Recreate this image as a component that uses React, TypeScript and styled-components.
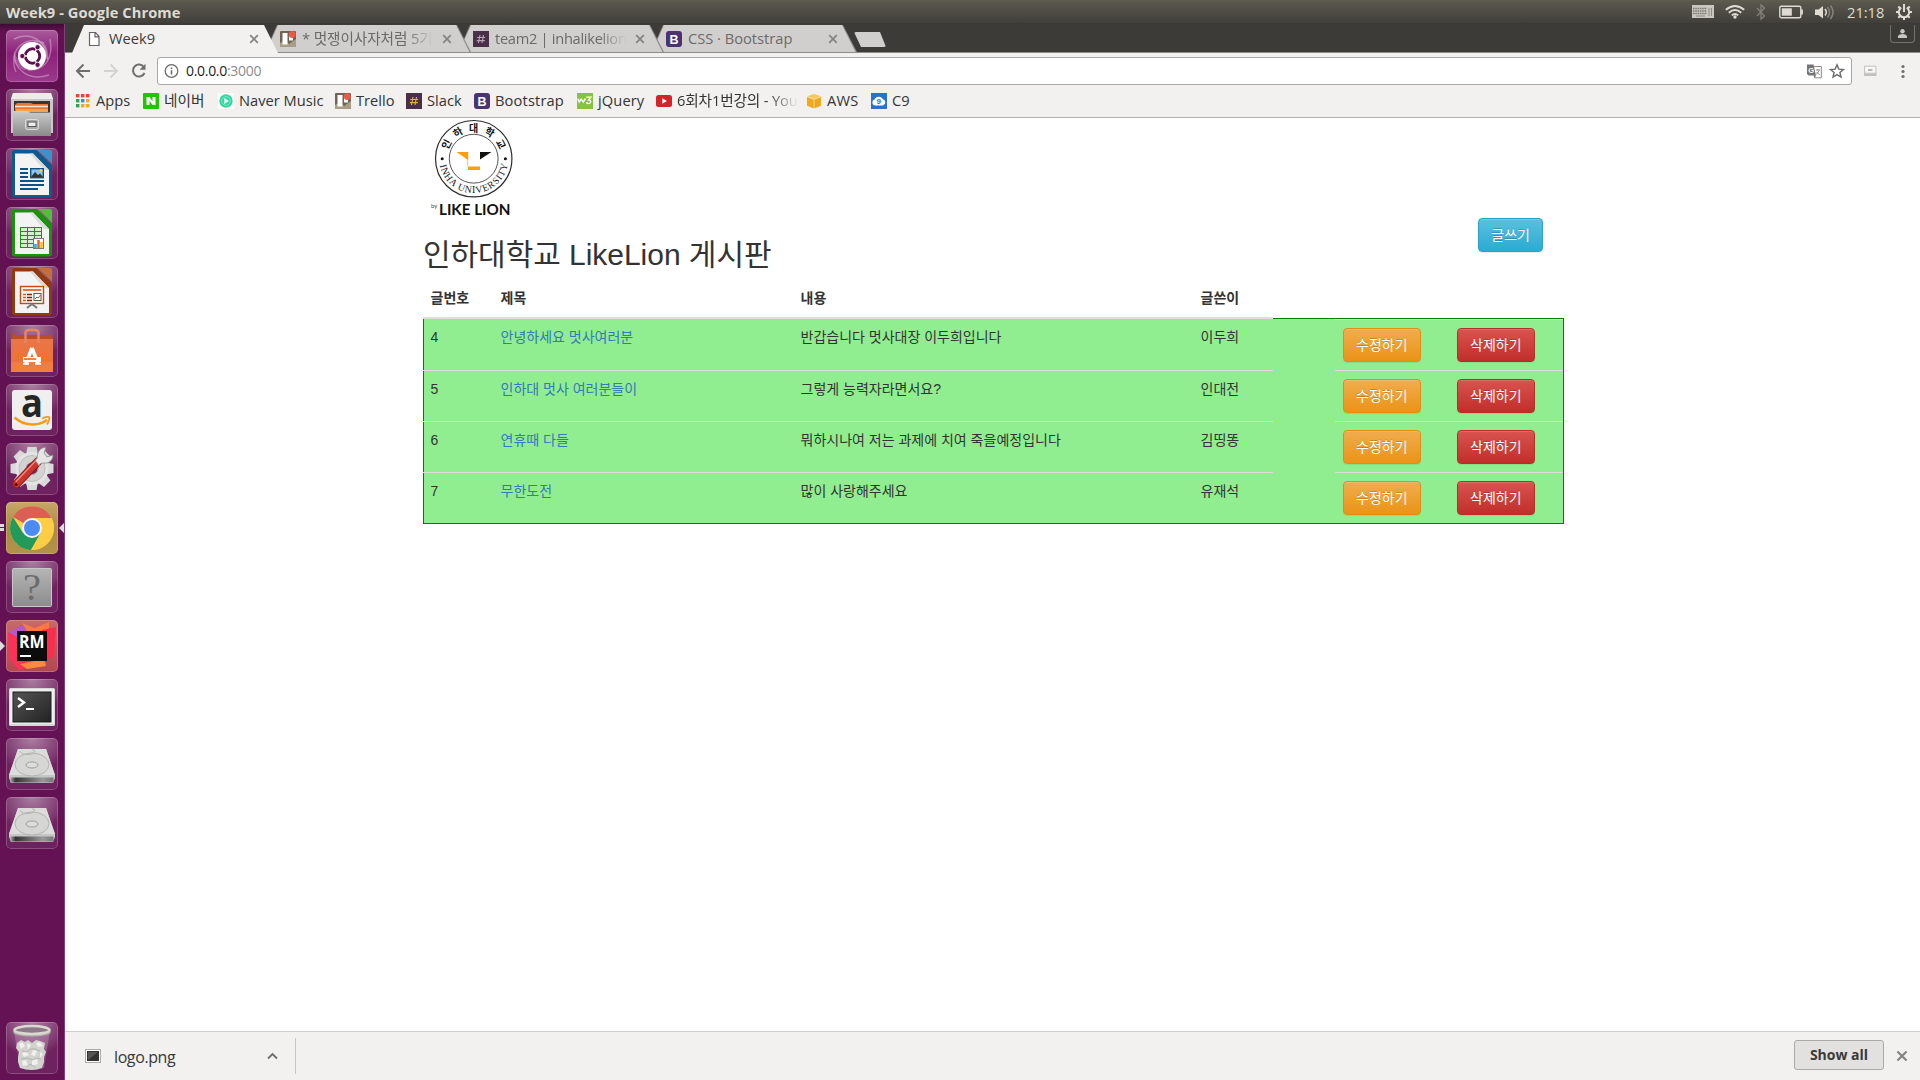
import React from 'react';
import styled, { createGlobalStyle, css } from 'styled-components';

const ui = `"Open Sans", "Noto Sans CJK KR", sans-serif`;
const body = `"Liberation Sans", "Noto Sans CJK KR", sans-serif`;

const Global = createGlobalStyle`
  *, *::before, *::after { box-sizing: border-box; }
  body { margin: 0; background: #fff; overflow: hidden; }
  svg { display: block; flex: none; }
`;

const Desktop = styled.div`
  width: 1920px;
  height: 1080px;
  display: grid;
  grid-template: 24px 1056px / 65px 1855px;
  font-family: ${ui};
  overflow: hidden;
`;

const Label = styled.span<{ $ls?: number }>`
  white-space: nowrap;
  letter-spacing: ${p => p.$ls ?? 0}px;
`;

/* ---------- top panel ---------- */
const Panel = styled.header`
  grid-column: 1 / -1;
  display: flex;
  align-items: center;
  justify-content: space-between;
  padding: 0 8px 0 6px;
  background: linear-gradient(#5f5c50 0, #59564d 3px, #403f3a 23px, #35342f 24px);
  color: #dfdbd2;
`;
const PanelTitle = styled(Label)`
  font-size: 14.67px;
  font-weight: 700;
  line-height: 22px;
  margin-bottom: 1px;
`;
const Tray = styled.div`
  display: flex;
  align-items: center;
  height: 24px;
`;
const Clock = styled(Label)`
  font-size: 14.67px;
  line-height: 22px;
  width: 36px;
  margin: 0 13px 1px 12px;
`;

/* ---------- launcher ---------- */
const LauncherBar = styled.nav`
  display: flex;
  flex-direction: column;
  align-items: flex-start;
  gap: 7px;
  padding: 6px 0 6px 6px;
  background: linear-gradient(#3f0b36 0, #611151 7px, #651254 100%);
  border-right: 1px solid #84407a;
`;
const Tile = styled.div<{ $bg?: string; $last?: boolean }>`
  position: relative;
  width: 52px;
  height: 52px;
  border-radius: 5px;
  background: ${p =>
    p.$bg ??
    'radial-gradient(ellipse 70% 34px at 50% 0, rgba(255,255,255,.42), rgba(255,255,255,.1) 80%, transparent), rgba(255,255,255,.07)'};
  box-shadow: inset 0 0 0 1px rgba(255, 255, 255, 0.2);
  ${p => p.$last && css`margin-top: auto;`}
`;
const Pip = styled.i<{ $right?: boolean }>`
  position: absolute;
  top: 21px;
  ${p => (p.$right ? 'left: 53px;' : 'left: -6px;')}
  border: 5px solid transparent;
  ${p => (p.$right ? 'border-right-color: #ddd; border-left-width: 0;' : 'border-left-color: #ddd; border-right-width: 0;')}
`;
const Bars = styled.i`
  position: absolute;
  left: -6px;
  top: 22px;
  width: 4px;
  height: 7px;
  border: solid #ddd;
  border-width: 3px 0;
`;

/* ---------- browser chrome ---------- */
const Browser = styled.main`
  display: flex;
  flex-direction: column;
  background: #fff;
`;
const TabStrip = styled.div`
  display: flex;
  justify-content: space-between;
  align-items: flex-start;
  height: 29px;
  padding: 1px 5px 0 7px;
  background: #3c3b37;
  border-bottom: 1px solid #8f8d8b;
`;
const Tabs = styled.div`
  display: flex;
  isolation: isolate;
`;
const Tab = styled.div<{ $active?: boolean; $z: number }>`
  position: relative;
  z-index: ${p => p.$z};
  display: flex;
  align-items: center;
  width: 206px;
  height: ${p => (p.$active ? 28 : 27)}px;
  margin-right: -13px;
  padding: 0 19px 0 15px;
  color: ${p => (p.$active ? '#3c3c3c' : '#6b6a69')};
  background: ${p => (p.$active ? '#f2f1f0' : '#8d8b89')};
  clip-path: polygon(0 100%, 12px 0, 192px 0, 100% 100%);
  font-size: 14.67px;
  line-height: 27px;
  &::before {
    content: '';
    position: absolute;
    z-index: -1;
    inset: 0;
    background: ${p => (p.$active ? '#f2f1f0' : '#d1cfcd')};
    clip-path: polygon(1px 100%, 13px 0, 191px 0, 204.5px 100%);
  }
`;
const Favicon = styled.span<{ $gap?: number }>`
  width: 16px;
  height: 16px;
  margin-right: ${p => p.$gap ?? 6}px;
  flex: none;
`;
const TabText = styled(Label)<{ $fade?: boolean }>`
  flex: 1;
  overflow: hidden;
  margin: -1px 9px 0 0;
  ${p => p.$fade && css`mask-image: linear-gradient(90deg, #000 80%, transparent 100%);`}
`;
const NewTab = styled.div`
  width: 32px;
  height: 15px;
  margin: 7px 0 0 10px;
  background: #d1cfcd;
  border-radius: 2px;
  clip-path: polygon(0 0, 26px 0, 100% 100%, 7px 100%);
`;
const Profile = styled.div`
  display: flex;
  justify-content: center;
  width: 25px;
  height: 18px;
  padding-top: 4px;
  border: 1px solid #74726c;
  border-top: 0;
  border-radius: 0 0 4px 4px;
`;
const Toolbar = styled.div`
  display: flex;
  align-items: center;
  height: 36px;
  padding: 0 11px 0 10px;
  background: #f2f1f0;
`;
const NavButton = styled.span`
  width: 18px;
  height: 18px;
  margin-right: 10px;
`;
const Omnibox = styled.div`
  display: flex;
  align-items: center;
  width: 1695px;
  height: 28px;
  margin: 0 12px 0 -2px;
  padding: 0 6px;
  border: 1px solid #a9a7a5;
  border-radius: 3px;
  background: #fff;
`;
const Url = styled(Label)`
  flex: 1;
  margin-left: 7px;
  font-size: 14px;
  line-height: 24px;
  color: #222;
  span { color: #8c8c8c; }
`;
const Bookmarks = styled.div`
  display: flex;
  align-items: center;
  height: 29px;
  padding: 0 0 5px 11px;
  background: #f2f1f0;
  border-bottom: 1px solid #b3b1af;
`;
const Bookmark = styled.div<{ $w: number }>`
  display: flex;
  align-items: center;
  width: ${p => p.$w}px;
  flex: none;
  color: #343434;
  font-size: 14.67px;
  line-height: 22px;
`;
const BookmarkText = styled(Label)<{ $fade?: boolean }>`
  margin-bottom: 1px;
  ${p => p.$fade && css`mask-image: linear-gradient(90deg, #000 76%, transparent 100%);`}
`;

/* ---------- page ---------- */
const Page = styled.section`
  flex: 1;
  padding-left: 358px;
  font-family: ${body};
  font-size: 14px;
  line-height: 20px;
  color: #333;
`;
const Container = styled.div`
  width: 1141px;
`;
const Banner = styled.div`
  display: flex;
  justify-content: space-between;
  height: 159px;
  padding-right: 21px;
`;
const Heading = styled.h2`
  margin: 10px 0 0;
  font-size: 30px;
  font-weight: 400;
  line-height: 33px;
  letter-spacing: -0.04px;
  white-space: nowrap;
`;
const tones = {
  info: ['#5bc0de', '#2aabd2', '#28a4c9'],
  warning: ['#f0ad4e', '#eb9316', '#e38d13'],
  danger: ['#d9534f', '#c12e2a', '#b92c28'],
};
const Btn = styled.button<{ $tone: keyof typeof tones }>`
  height: 34px;
  padding: 0 12px;
  border: 1px solid ${p => tones[p.$tone][2]};
  border-radius: 4px;
  background: linear-gradient(${p => tones[p.$tone][0]}, ${p => tones[p.$tone][1]});
  box-shadow: inset 0 1px 0 rgba(255, 255, 255, 0.15), 0 1px 1px rgba(0, 0, 0, 0.075);
  text-shadow: 0 -1px 0 rgba(0, 0, 0, 0.2);
  color: #fff;
  font: 14px/20px ${body};
  white-space: nowrap;
`;
const WriteButton = styled(Btn)`
  margin-top: 100px;
`;
const columns = '70px 300px 400px 80px 62px 114px 1fr';
const HeadRow = styled.div`
  position: relative;
  z-index: 1;
  display: grid;
  grid-template-columns: ${columns};
  height: 42px;
`;
const HeadCell = styled.div`
  padding: 11px 8px 0 7.5px;
  border-bottom: 2px solid #ddd;
  font-weight: 700;
`;
const Board = styled.div`
  margin-top: -1px;
  border: 1px solid #008000;
  background: #90ee90;
`;
const Row = styled.div`
  display: grid;
  grid-template-columns: ${columns};
  height: 51px;
  margin-left: -1px;
`;
const Cell = styled.div<{ $line?: boolean; $edge?: boolean; $up?: boolean }>`
  padding: 8px 8px 0 7.5px;
  border-top: 1px solid ${p => (p.$line ? '#ddd' : 'transparent')};
  ${p => p.$up && css`padding-top: 7px;`}
  ${p => p.$edge && css`background: linear-gradient(#008000, #008000) 0 0 / 1px 100% no-repeat padding-box;`}
`;
const ActionCell = styled(Cell)`
  padding-left: 8px;
`;
const PostLink = styled.a`
  color: #337ab7;
`;

/* ---------- download shelf ---------- */
const Shelf = styled.footer`
  display: flex;
  align-items: center;
  height: 49px;
  padding: 0 12px 0 20px;
  background: #f2f1f0;
  border-top: 1px solid #cfcdcb;
`;
const Download = styled.div`
  display: flex;
  align-items: center;
  width: 211px;
  height: 36px;
  padding-right: 17px;
  border-right: 1px solid #c9c7c5;
  color: #383838;
  font-size: 16px;
`;
const FileName = styled(Label)`
  flex: 1;
  margin: 1px 0 0 13px;
`;
const ShowAll = styled.button`
  width: 90px;
  height: 30px;
  margin: 0 12px 2px auto;
  padding: 0;
  border: 1px solid #aba9a7;
  border-radius: 3px;
  background: #e2e1df;
  color: #3a3a3a;
  font: 700 14px/26px ${ui};
`;

/* ---------- small icons ---------- */
const Close = ({ size = 10 }: { size?: number }) => (
  <svg width={size} height={size} viewBox="0 0 10 10">
    <path d="M1.2 1.2 8.8 8.8M8.8 1.2 1.2 8.8" stroke="#858483" strokeWidth="1.8" />
  </svg>
);
const TrelloIcon = () => (
  <svg width="16" height="16" viewBox="0 0 16 16">
    <rect width="16" height="16" rx="1" fill="#6f6551" />
    <path d="M0 12 5 9l4 4 7-5v8H0z" fill="#a99d85" />
    <rect x="2.500" y="2" width="5" height="11.500" fill="#fff" />
    <rect x="9" y="2" width="4" height="7.500" fill="#fff" />
    <circle cx="12.200" cy="3.600" r="3.400" fill="#eb5a46" />
  </svg>
);
const SlackIcon = ({ c = '#e5b13b' }: { c?: string }) => (
  <svg width="16" height="16" viewBox="0 0 16 16">
    <rect width="16" height="16" fill="#4a2f48" />
    <path d="M7 4 5.5 12M10.5 4 9 12M4.2 6.5h8M3.8 9.6h8" stroke={c} strokeWidth="1.1" />
  </svg>
);
const BootstrapIcon = () => (
  <svg width="16" height="16" viewBox="0 0 16 16">
    <rect width="16" height="16" rx="3" fill="#4c3173" />
    <text x="3.6" y="12.6" fontFamily="Liberation Sans" fontWeight="700" fontSize="12.5" fill="#fff">B</text>
  </svg>
);
const AppsIcon = () => (
  <svg width="14" height="16" viewBox="0 0 14 16">
    {['#ea4335', '#ea4335', '#ea4335', '#34a060', '#2f8df0', '#f3a91c', '#34a060', '#f3a91c', '#f3a91c'].map((c, i) => (
      <rect key={i} x={(i % 3) * 5} y={1 + Math.floor(i / 3) * 5} width="3.4" height="3.4" fill={c} />
    ))}
  </svg>
);
const NaverIcon = () => (
  <svg width="16" height="16" viewBox="0 0 16 16">
    <rect width="16" height="16" rx="1" fill="#1ec800" />
    <path d="M3.5 12V4h3l3 4.2V4h3v8h-3l-3-4.2V12z" fill="#fff" />
  </svg>
);
const MusicIcon = () => (
  <svg width="16" height="16" viewBox="0 0 16 16">
    <rect width="16" height="16" fill="#fff" />
    <circle cx="8" cy="8" r="6.7" fill="#2fd8a0" />
    <circle cx="8" cy="8" r="4.3" fill="none" stroke="#8eeccc" strokeWidth=".8" />
    <path d="m6.3 5 4.6 3-4.6 3z" fill="#fff" />
  </svg>
);
const JqIcon = () => (
  <svg width="16" height="16" viewBox="0 0 16 16">
    <rect width="16" height="16" fill="#86c440" />
    <path d="M.7 5.500 2.200 9 4.200 6.200 6.200 9 8.500 5.500M9.300 4.300h4.500l-2.200 2.500c3 0 2.600 4-.3 3.800-1.200 0-1.800-.6-2-1.300" fill="none" stroke="#fff" strokeWidth="1.400" />
  </svg>
);
const YtIcon = () => (
  <svg width="16" height="16" viewBox="0 0 16 16">
    <rect y="2" width="16" height="12" rx="2.5" fill="#d3242a" />
    <path d="m6.3 5.2 4.6 2.8-4.6 2.8z" fill="#fff" />
  </svg>
);
const AwsIcon = () => (
  <svg width="16" height="16" viewBox="0 0 16 16">
    <path d="M1 3.300 8 1l7 2.300L8 6z" fill="#f8c65a" />
    <path d="M1 4v8.800L7.700 15.500V6.600zM15 4v8.800L8.300 15.500V6.600z" fill="#efa91f" />
  </svg>
);
const C9Icon = () => (
  <svg width="16" height="16" viewBox="0 0 16 16">
    <rect width="16" height="16" fill="#2a73c4" />
    <path d="M4 12.500a3 3 0 0 1-.4-5.900C4.500 3 10.500 2.500 11.800 6.300a3.200 3.200 0 0 1 .2 6.200z" fill="#fff" />
    <text x="5.600" y="11" fontFamily="Liberation Sans" fontWeight="700" fontSize="8" fill="#2a73c4">9</text>
  </svg>
);
const PageIcon = () => (
  <svg width="16" height="16" viewBox="0 0 16 16">
    <path d="M2.500 1.500h6l3.500 3.800v9.200h-9.500zM8 1.500v4.300h4" fill="#fff" stroke="#646464" strokeWidth="1.200" />
  </svg>
);

/* ---------- launcher icons, drawn on the 52px tile ---------- */
const Ico = ({ children }: { children: React.ReactNode }) => (
  <svg width="52" height="52" viewBox="0 0 52 52">{children}</svg>
);
const Dash = () => (
  <Ico>
    <g fill="none" stroke="#fff" strokeOpacity=".32" strokeWidth="1.500">
      <path d="M10 42C1 20 20 4 38 13M44 9c4 20-6 32-22 31M8 9c16-8 34 2 33 20M43 45C22 52 6 38 9 22" />
    </g>
    <path d="M26 40C10 42 6 30 8 21c3 9 8 15 18 19zM26 12c12-6 18 6 16 20-2-9-8-16-16-20z" fill="#fff" opacity=".2" />
    <circle cx="26" cy="26" r="14" fill="#fff" />
    <circle cx="26.500" cy="26" r="7.200" fill="none" stroke="#5c104c" strokeWidth="2.900" />
    <path d="M26.500 26 14 26M26.500 26l6.500-11M26.500 26l6.500 11" stroke="#fff" strokeWidth="1.300" />
    <circle cx="26.500" cy="26" r="5.600" fill="#fff" />
    <g fill="#5c104c" stroke="#fff" strokeWidth=".8">
      <circle cx="16.300" cy="26" r="2.600" />
      <circle cx="31.600" cy="17.200" r="2.600" />
      <circle cx="31.600" cy="34.800" r="2.600" />
    </g>
  </Ico>
);
const Files = () => (
  <Ico>
    <defs>
      <linearGradient id="cab" x1="0" y1="0" x2="0" y2="1"><stop stopColor="#ccc" /><stop offset="1" stopColor="#8a8a8a" /></linearGradient>
    </defs>
    <path d="M7 4h38l2 6v34H5V10z" fill="#c9c9c9" />
    <path d="M7 4h38l2 6H5z" fill="#ececec" />
    <rect x="8" y="12" width="36" height="12" fill="#3a3531" />
    <path d="M11 14h14l2 1h15v8H9v-7z" fill="#e8762c" />
    <path d="M9 17.500h33" stroke="#fbe4cc" strokeWidth="1.500" />
    <path d="M10 20h32v3H10z" fill="#f6a254" />
    <path d="M7 22h15l2 1.500h21V47H7z" fill="url(#cab)" />
    <rect x="19.500" y="30.500" width="13" height="10" rx="2" fill="#aaa" stroke="#dedede" />
    <rect x="22" y="33" width="8" height="4.500" fill="#eee" stroke="#555" />
  </Ico>
);
const Doc = ({ c, d, children }: { c: string; d: string; children: React.ReactNode }) => (
  <Ico>
    <path d="M8 2h19l19 19v26a2.500 2.500 0 0 1-2.500 2.500h-35A2.500 2.500 0 0 1 6 47V4a2 2 0 0 1 2-2z" fill={c} />
    <path d="M33 2h11a2 2 0 0 1 2 2v12z" fill={d} />
    <path d="M9 5.500h18L43 22v25H9z" fill="#f3f3f3" />
    <path d="M27 5.500 43 22h-5L24 5.500z" fill="#dadada" />
    <path d="M26 2h5l15 15.500V25z" fill={c} />
    {children}
  </Ico>
);
const Writer = () => (
  <Doc c="#0c5a8e" d="#3a94cc">
    <path d="M14 21h8M14 25h8M14 29h8M14 33h24M14 37h24M14 41h18" stroke="#0b5183" strokeWidth="2" />
    <rect x="24.700" y="20.700" width="12.600" height="9" fill="#8cc4ec" stroke="#0b5183" strokeWidth="1.400" />
    <path d="m25 29 4-5 3 3 2-1.500 3 3.500z" fill="#333" />
    <circle cx="35" cy="22.500" r="1.500" fill="#f4d43a" />
  </Doc>
);
const Calc = () => (
  <Doc c="#18930c" d="#50bf3c">
    <rect x="14.500" y="20.500" width="21" height="20" fill="#d5f0cc" stroke="#18930c" />
    <path d="M14 24.500h22M14 28.500h22M14 32.500h22M14 36.500h22M21.500 20v21M28.500 20v21" stroke="#18930c" />
    <rect x="27.500" y="31.500" width="10" height="10" fill="#fff" stroke="#777" />
    <path d="M29.500 41v-4" stroke="#29a5e3" strokeWidth="2.500" />
    <path d="M32.500 41v-8" stroke="#e2641b" strokeWidth="2.500" />
    <path d="M35.500 41v-6" stroke="#f0bf21" strokeWidth="2.500" />
  </Doc>
);
const Impress = () => (
  <Doc c="#93390e" d="#c2703a">
    <rect x="14.500" y="20.500" width="23" height="17" fill="#fff4ec" stroke="#c04d17" strokeWidth="1.400" />
    <path d="M17 24h18" stroke="#df7a48" strokeWidth="2" />
    <path d="M17 28.500h3M17 31.500h3M17 34.500h3" stroke="#d35c22" strokeWidth="1.700" />
    <path d="M21 28.500h5M21 31.500h5M21 34.500h5" stroke="#762b08" strokeWidth="1.700" />
    <rect x="28" y="27.500" width="7" height="7" fill="#fff" stroke="#555" />
    <path d="m29 33 2-2 1 1 2.500-3" stroke="#27a327" fill="none" />
    <path d="m26 38-5 4M26 38l5 4" stroke="#777" strokeWidth="2" />
  </Doc>
);
const Software = () => (
  <Ico>
    <defs><linearGradient id="bag" x1="0" y1="0" x2="0" y2="1"><stop stopColor="#e8764a" /><stop offset="1" stopColor="#f0702c" /></linearGradient></defs>
    <path d="M5 14h42v33H5z" fill="url(#bag)" />
    <path d="m5 14 2-9v5h38V5l2 9z" fill="#b94d24" />
    <path d="M5 37h42v10H5z" fill="#f4854c" opacity=".6" />
    <path d="M19.500 18V8q0-3 3-3h7q3 0 3 3v10" fill="none" stroke="#e78564" strokeWidth="2.500" />
    <path d="m26 23-6 15.500M26 23l6 15.500" stroke="#fff" strokeWidth="3.600" />
    <path d="M17 34.500h18" stroke="#fff" strokeWidth="5" />
    <path d="M18 34h12" stroke="#ee7434" strokeWidth="1.800" />
    <path d="M17 38.800h6M29 38.800h6" stroke="#fff" strokeWidth="2" />
  </Ico>
);
const Amazon = () => (
  <Ico>
    <rect x="6" y="6" width="40" height="40" rx="3" fill="#efefef" />
    <text x="15" y="33" fontFamily="Open Sans" fontWeight="700" fontSize="39" fill="#252525" textLength="22" lengthAdjust="spacingAndGlyphs">a</text>
    <path d="M8.500 33.500C18 42 32 42.500 41 36" fill="none" stroke="#f59a18" strokeWidth="2.400" />
    <path d="M36 34.500c4-2 8-2 7.500-.5s-1 4.500-2.500 6.500" fill="none" stroke="#f59a18" strokeWidth="1.800" />
  </Ico>
);
const Settings = () => (
  <Ico>
    <g fill="#d9d9d9">
      {[0, 45, 90, 135].map(a => (
        <path key={a} d="M21.500 4h9l1.500 8v27l-1.500 8h-9L20 39V12z" transform={`rotate(${a} 26 25.500)`} />
      ))}
    </g>
    <circle cx="26" cy="25.500" r="16.500" fill="#e4e4e4" />
    <circle cx="26" cy="25.500" r="13" fill="#d3d3d3" stroke="#bdbdbd" />
    <circle cx="26" cy="25.500" r="6" fill="#6d2b60" stroke="#aaa" />
    <path d="M10.500 41 32 18.500" stroke="#8e1712" strokeWidth="8.400" strokeLinecap="round" />
    <path d="M10.500 41 32 18.500" stroke="#cb352e" strokeWidth="6.600" strokeLinecap="round" />
    <path d="M10 38.500 30 17.500" stroke="#ee8880" strokeWidth="1.500" strokeLinecap="round" />
    <circle cx="10" cy="41.500" r="1.600" fill="#5e0e0a" />
    <path d="M29 17c3-1 2-4 3-7s4-6 8-5.500l-2 5.500 3 4 6-2c0 5-4 9-9 8-2 0-4 0-5 3z" fill="#e6e6e6" stroke="#888" strokeWidth=".8" />
  </Ico>
);
const ChromeIcon = () => (
  <Ico>
    <circle cx="26" cy="26" r="22" fill="#fdd048" />
    <path d="M45.500 16H26v10L7 15A22 22 0 0 1 45.500 16z" fill="#da5f55" />
    <path d="M7 15A22 22 0 0 0 25 48l9.500-17L17 31z" fill="#219a5b" />
    <path d="M25 48 35 31V16h10.500A22 22 0 0 1 25 48z" fill="#fdcd45" />
    <circle cx="26" cy="26" r="10" fill="#f5f5f5" />
    <circle cx="26" cy="26" r="8" fill="#4b8bf2" />
  </Ico>
);
const Unknown = () => (
  <Ico>
    <defs><linearGradient id="unk" x1="0" y1="0" x2="0" y2="1"><stop stopColor="#b5b5b5" /><stop offset="1" stopColor="#8c8c8c" /></linearGradient></defs>
    <rect x="6.500" y="7.500" width="39" height="38" rx="1" fill="url(#unk)" stroke="#c8c8c8" />
    <text x="17" y="38.500" fontFamily="Liberation Serif" fontSize="38" fill="#6c6c6c" textLength="18" lengthAdjust="spacingAndGlyphs">?</text>
  </Ico>
);
const RubyMine = () => (
  <Ico>
    <path d="m2 13 14-8 16 12 16 14-9 12-26 7L3 38z" fill="#fc3158" />
    <path d="m3 12 14-7 15 7-20 6z" fill="#b358cf" />
    <path d="m16 3 13 5 14-6v14l-20-2z" fill="#f97b3c" />
    <path d="M36 10 50 7l-2 30-14 4z" fill="#fb2d4f" />
    <path d="m14 44 24-5 2 7-19 3z" fill="#f98b3c" />
    <rect x="11" y="11" width="30" height="30" fill="#0c0c0c" />
    <text x="13" y="27.500" fontFamily="Open Sans" fontWeight="700" fontSize="17" fill="#fff" textLength="25.500" lengthAdjust="spacingAndGlyphs">RM</text>
    <path d="M14 36h11" stroke="#fff" strokeWidth="2" />
  </Ico>
);
const Terminal = () => (
  <Ico>
    <defs><linearGradient id="trm" x1="0" y1="0" x2="1" y2="1"><stop stopColor="#555" /><stop offset="1" stopColor="#222" /></linearGradient></defs>
    <rect x="3" y="9" width="46" height="38" rx="1.500" fill="#d6d6d6" />
    <rect x="4" y="10" width="44" height="35" fill="#efefef" />
    <rect x="7" y="13" width="38" height="30" fill="url(#trm)" stroke="#1e1e1e" />
    <path d="m12 19 6 4.500-6 4.500" fill="none" stroke="#fff" strokeWidth="2.400" />
    <path d="M20 30h8" stroke="#fff" strokeWidth="2" />
  </Ico>
);
const Drive = () => (
  <Ico>
    <defs><linearGradient id="drv"><stop stopColor="#a5a5a5" /><stop offset=".12" stopColor="#333" /><stop offset=".75" stopColor="#999" /><stop offset="1" stopColor="#777" /></linearGradient></defs>
    <path d="M12 11h28l9 26v3l-2 5H5l-2-5v-3z" fill="#c6c6c6" />
    <path d="M12 11h28l9 26H3z" fill="#dcdcda" />
    <ellipse cx="26" cy="26.500" rx="17" ry="11.500" fill="#d6d6d4" stroke="#b3b3b1" />
    <ellipse cx="26" cy="27" rx="6" ry="3" fill="#ddd" stroke="#a0a0a0" />
    <path d="M14 13q2 5 12 3q6-4 0-4" fill="none" stroke="#b5b5b5" />
    <rect x="4.500" y="39.500" width="43" height="5" fill="url(#drv)" />
  </Ico>
);
const Trash = () => (
  <Ico>
    <path d="m8 9 6 37q12 4 24 0l6-37z" fill="#eee" opacity=".2" />
    <path d="m11 21 4-3 4 2 3-2 4 3 4-3 4 1 5 2-1 6 2 3-2 5v5l-2 6q-10 4-22 0l-2-6v-5l1-5-3-4z" fill="#d2d2ce" />
    <path d="m13 22 3-2 3 4-4 3zM21 21l4 2-3 5zM30 21l4-1 3 4-5 1zM16 31l4-2 3 4-5 2zM27 28l4 1-2 5-4-1zM34 30l3 2-3 4zM16 39l4-1 2 5-5 1zM26 38l5-1 1 5-6 2z" fill="#f0f0ed" />
    <path d="m16 29 5 1 3-3 5 0 5 2M15 37l7-1 4 2 5-2 4 1M21 45l3-3 5 3" fill="none" stroke="#a9a9a4" strokeWidth=".8" />
    <path d="M7.500 8v3c4 4.500 33 4.500 37 0V8z" fill="#b3b3a9" />
    <ellipse cx="26" cy="8" rx="17.500" ry="4" fill="#8c7a88" stroke="#d9d9d0" strokeWidth="2.500" />
  </Ico>
);

const Logo = () => (
  <svg width="100" height="110" viewBox="0 0 100 110">
    <g fill="none" stroke="#2b2b2b">
      <circle cx="50.700" cy="40.700" r="38.200" strokeWidth="1.200" />
      <circle cx="50.700" cy="40.700" r="24.400" strokeWidth=".8" />
    </g>
    <path id="ring" d="M16.200 40.700A34.500 34.500 0 0 0 85.200 40.700" fill="none" />
    <text fontFamily="Liberation Serif" fontSize="9.800" fill="#222">
      <textPath href="#ring" startOffset="6.500" textLength="96">INHA UNIVERSITY</textPath>
    </text>
    <circle cx="19.200" cy="40.700" r="1.500" fill="#111" />
    <circle cx="82.400" cy="40.700" r="1.500" fill="#111" />
    <g fontFamily="Noto Sans CJK KR" fontWeight="700" fontSize="10" fill="#111" textAnchor="middle">
      {['인', '하', '대', '학', '교'].map((ch, i) => (
        <text key={ch} x="50.700" y="13.500" transform={`rotate(${(i - 2) * 31} 50.700 40.700)`}>{ch}</text>
      ))}
    </g>
    <path d="M33.500 34H45v8z" fill="#ff9d0a" />
    <path d="M44.700 34v14.500" stroke="#ff9d0a" strokeWidth=".7" />
    <path d="M45 48.500h12v3.500H45z" fill="#ff9d0a" />
    <path d="M57 34h11.500L57 41.500z" fill="#111" />
    <text x="8" y="90" fontFamily="Lato" fontSize="6" fill="#444">by</text>
    <text x="16" y="96.500" fontFamily="Lato" fontWeight="700" fontSize="16" fill="#111" textLength="71.500" lengthAdjust="spacingAndGlyphs">LIKE LION</text>
  </svg>
);

const TrayIcon = styled.svg.attrs({ height: 24 })<{ $gap?: number }>`
  margin-left: ${p => p.$gap ?? 0}px;
`;
const TrayIcons = () => (
  <>
    <TrayIcon width="22" viewBox="0 0 22 24">
      <rect y="5" width="22" height="13" fill="#c9c7c0" />
      <path d="M1 8.500h14M1 11h14M1 13.500h14" stroke="#77756f" strokeWidth="1.500" strokeDasharray="1.500 .8" />
      <path d="M4 16h9M17 8v8M19.500 8v8" stroke="#8d8b85" />
    </TrayIcon>
    <TrayIcon $gap={11} width="20" viewBox="0 0 20 24">
      <g fill="none" stroke="#dfdbd2" strokeWidth="1.900">
        <path d="M.8 9.800Q10 2.200 19.200 9.800M3.800 12.700Q10 7.500 16.200 12.700M6.700 15.400Q10 12.500 13.300 15.400" />
      </g>
      <circle cx="10" cy="17" r="1.700" fill="#dfdbd2" />
    </TrayIcon>
    <TrayIcon $gap={11} width="10" viewBox="0 0 10 24">
      <path d="m1 8 7.500 8L5 19V5l3.500 3L1 16" fill="none" stroke="#84827a" strokeWidth="1.300" />
    </TrayIcon>
    <TrayIcon $gap={13} width="25" viewBox="0 0 25 24">
      <rect x=".8" y="6.300" width="21" height="11.400" rx="1.500" fill="none" stroke="#dfdbd2" strokeWidth="1.400" />
      <rect x="2.800" y="8.300" width="10" height="7.400" fill="#dfdbd2" />
      <path d="M23 9.500v5" stroke="#dfdbd2" strokeWidth="1.800" />
    </TrayIcon>
    <TrayIcon $gap={10} width="21" viewBox="0 0 21 24">
      <path d="M1 9.500h3.500L9 6v12.500L4.500 15H1z" fill="#dfdbd2" />
      <path d="M11 9q2.500 3.300 0 6.500" fill="none" stroke="#dfdbd2" strokeWidth="1.500" />
      <path d="M13.500 7q4 5.300 0 10.500M16.500 5.500q5 6.700 0 13.500" fill="none" stroke="#85837b" strokeWidth="1.500" />
    </TrayIcon>
  </>
);
const Power = () => (
  <svg width="16" height="24" viewBox="0 0 16 24">
    <g stroke="#dfdbd2" fill="none" strokeWidth="2">
      <path d="M5.300 7.700a5.200 5.200 0 1 0 5.400 0" />
      <path d="M8 4v8" />
      <path d="M0 12h3M13 12h3M8 17v3M2.300 6.500l2 2M13.700 6.500l-2 2M2.300 17.700l2-2M13.700 17.700l-2-2" />
    </g>
  </svg>
);
const StarIcon = styled.svg`
  margin-left: 7px;
`;
const MenuDots = styled.svg`
  margin-left: 24px;
`;

const launcher: { icon: React.ReactNode; bg?: string; pips?: React.ReactNode }[] = [
  { icon: <Dash />, bg: 'linear-gradient(#a95b9c, #8c2079 45%, #9c3a8c)' },
  { icon: <Files /> },
  { icon: <Writer /> },
  { icon: <Calc /> },
  { icon: <Impress /> },
  { icon: <Software /> },
  { icon: <Amazon /> },
  { icon: <Settings /> },
  { icon: <ChromeIcon />, bg: 'linear-gradient(#c5a768, #ad8c42 50%, #b39349)', pips: <><Bars /><Pip $right /></> },
  { icon: <Unknown /> },
  { icon: <RubyMine />, bg: 'linear-gradient(#c66a6a, #b34850)', pips: <Pip /> },
  { icon: <Terminal /> },
  { icon: <Drive /> },
  { icon: <Drive /> },
];

const tabs = [
  { icon: <PageIcon />, text: 'Week9', ls: 0 },
  { icon: <TrelloIcon />, text: '* 멋쟁이사자처럼 5기', ls: -0.1, fade: true },
  { icon: <SlackIcon c="#b9a5b8" />, text: 'team2 | inhalikelion', ls: -0.3, fade: true },
  { icon: <BootstrapIcon />, text: 'CSS · Bootstrap', ls: 0 },
];

const bookmarks = [
  { w: 67, icon: <AppsIcon />, text: 'Apps', ls: 0, gap: 4 },
  { w: 75, icon: <NaverIcon />, text: '네이버', ls: 0 },
  { w: 117, icon: <MusicIcon />, text: 'Naver Music', ls: 0 },
  { w: 71, icon: <TrelloIcon />, text: 'Trello', ls: 0 },
  { w: 68, icon: <SlackIcon />, text: 'Slack', ls: 0 },
  { w: 103, icon: <BootstrapIcon />, text: 'Bootstrap', ls: 0.15 },
  { w: 79, icon: <JqIcon />, text: 'jQuery', ls: 0.1 },
  { w: 150, icon: <YtIcon />, text: '6회차1번강의 - You', ls: -0.15, fade: true },
  { w: 65, icon: <AwsIcon />, text: 'AWS', ls: 0.2 },
  { w: 60, icon: <C9Icon />, text: 'C9', ls: 0 },
];

const posts = [
  ['4', '안녕하세요 멋사여러분', '반갑습니다 멋사대장 이두희입니다', '이두희'],
  ['5', '인하대 멋사 여러분들이', '그렇게 능력자라면서요?', '인대전'],
  ['6', '연휴때 다들', '뭐하시나여 저는 과제에 치여 죽을예정입니다', '김띵똥'],
  ['7', '무한도전', '많이 사랑해주세요', '유재석'],
];

export default function App() {
  return (
    <Desktop>
      <Global />
      <Panel>
        <PanelTitle $ls={0.07}>Week9 - Google Chrome</PanelTitle>
        <Tray>
          <TrayIcons />
          <Clock>21:18</Clock>
          <Power />
        </Tray>
      </Panel>
      <LauncherBar>
        {launcher.map((item, i) => (
          <Tile key={i} $bg={item.bg}>{item.icon}{item.pips}</Tile>
        ))}
        <Tile $last><Trash /></Tile>
      </LauncherBar>
      <Browser>
        <TabStrip>
          <Tabs>
            {tabs.map((t, i) => (
              <Tab key={t.text} $active={i === 0} $z={4 - i}>
                <Favicon>{t.icon}</Favicon>
                <TabText $ls={t.ls} $fade={t.fade}>{t.text}</TabText>
                <Close />
              </Tab>
            ))}
            <NewTab />
          </Tabs>
          <Profile>
            <svg width="9" height="9" viewBox="0 0 9 9">
              <circle cx="4.500" cy="2.200" r="2.200" fill="#c9c7c3" />
              <path d="M0 9V7q1-2 4.500-2T9 7v2z" fill="#c9c7c3" />
            </svg>
          </Profile>
        </TabStrip>
        <Toolbar>
          <NavButton>
            <svg width="18" height="18" viewBox="0 0 18 18"><path d="M15 9H3M8.500 2.500 2 9l6.500 6.500" fill="none" stroke="#6f6e6d" strokeWidth="2" /></svg>
          </NavButton>
          <NavButton>
            <svg width="18" height="18" viewBox="0 0 18 18"><path d="M1 9h12M7.500 2.500 14 9l-6.500 6.500" fill="none" stroke="#d4d3d2" strokeWidth="2" /></svg>
          </NavButton>
          <NavButton>
            <svg width="18" height="18" viewBox="0 0 18 18"><path d="M13 5.200A6 6 0 1 0 13.500 11" fill="none" stroke="#6f6e6d" strokeWidth="2" /><path d="M14.500 1.800v6h-6z" fill="#6f6e6d" /></svg>
          </NavButton>
          <Omnibox>
            <svg width="15" height="16" viewBox="0 0 15 16">
              <circle cx="7.500" cy="8" r="6.300" fill="none" stroke="#6b6b6b" strokeWidth="1.300" />
              <path d="M7.500 7.200v4.300M7.500 4.500v1.600" stroke="#6b6b6b" strokeWidth="1.600" />
            </svg>
            <Url $ls={-0.3}>0.0.0.0<span>:3000</span></Url>
            <svg width="15" height="15" viewBox="0 0 15 15">
              <path d="M6 2.500h8.300v11.300H7.500" fill="#fff" stroke="#8a8a8a" />
              <path d="M0 .5h6.500L9 11.500H1.500L0 10z" fill="#757575" />
              <path d="M6.500 11.500H9L7.500 14z" fill="#666" />
              <text x="1.200" y="8.700" fontFamily="Liberation Sans" fontWeight="700" fontSize="7.500" fill="#fff">G</text>
              <path d="M9 6h4M11 5v1M12.300 6.500l-3 4M9.700 8l3 3" stroke="#8a8a8a" fill="none" />
            </svg>
            <StarIcon width="16" height="16" viewBox="0 0 16 16">
              <path d="m8 1.800 1.800 4.300 4.700.4-3.600 3 1.100 4.600L8 11.600l-4 2.500 1.100-4.600-3.600-3 4.700-.4z" fill="none" stroke="#6b6b6b" strokeWidth="1.400" />
            </StarIcon>
          </Omnibox>
          <svg width="13" height="12" viewBox="0 0 13 12">
            <rect x=".6" y="1.200" width="11.300" height="7" fill="#f8f8f8" stroke="#c2c1c0" />
            <rect x="0" y="8.500" width="12.500" height="2.500" fill="#c2c1c0" />
            <path d="M4 4h4.500v2H4z" fill="#b9b8b7" />
          </svg>
          <MenuDots width="4" height="15" viewBox="0 0 4 15">
            <g fill="#6f6e6d"><circle cx="2" cy="2.500" r="1.600" /><circle cx="2" cy="7.500" r="1.600" /><circle cx="2" cy="12.500" r="1.600" /></g>
          </MenuDots>
        </Toolbar>
        <Bookmarks>
          {bookmarks.map(b => (
            <Bookmark key={b.text} $w={b.w}>
              <Favicon $gap={b.gap ?? 5}>{b.icon}</Favicon>
              <BookmarkText $ls={b.ls} $fade={b.fade}>{b.text}</BookmarkText>
            </Bookmark>
          ))}
        </Bookmarks>
        <Page>
          <Container>
            <Banner>
              <div>
                <Logo />
                <Heading>인하대학교 LikeLion 게시판</Heading>
              </div>
              <WriteButton $tone="info">글쓰기</WriteButton>
            </Banner>
            <HeadRow>
              {['글번호', '제목', '내용', '글쓴이'].map(h => <HeadCell key={h}>{h}</HeadCell>)}
            </HeadRow>
            <Board>
              {posts.map(([no, title, text, author], i) => (
                <Row key={no}>
                  <Cell $line={i > 0} $up={i === 0} $edge>{no}</Cell>
                  <Cell $line={i > 0} $up={i === 0}><PostLink>{title}</PostLink></Cell>
                  <Cell $line={i > 0} $up={i === 0}>{text}</Cell>
                  <Cell $line={i > 0} $up={i === 0}>{author}</Cell>
                  <Cell />
                  <ActionCell $line><Btn $tone="warning">수정하기</Btn></ActionCell>
                  <ActionCell $line><Btn $tone="danger">삭제하기</Btn></ActionCell>
                </Row>
              ))}
            </Board>
          </Container>
        </Page>
        <Shelf>
          <Download>
            <svg width="16" height="15" viewBox="0 0 16 15">
              <rect x=".5" y=".5" width="15" height="13" fill="#fff" stroke="#aaa" />
              <rect x="2" y="2" width="12" height="10" fill="#333" />
              <path d="M3 3h10L3 11z" fill="#555" />
            </svg>
            <FileName $ls={-0.4}>logo.png</FileName>
            <svg width="11" height="8" viewBox="0 0 11 8"><path d="M1 6.500 5.500 2 10 6.500" fill="none" stroke="#6f6e6d" strokeWidth="1.800" /></svg>
          </Download>
          <ShowAll>Show all</ShowAll>
          <Close size={12} />
        </Shelf>
      </Browser>
    </Desktop>
  );
}
